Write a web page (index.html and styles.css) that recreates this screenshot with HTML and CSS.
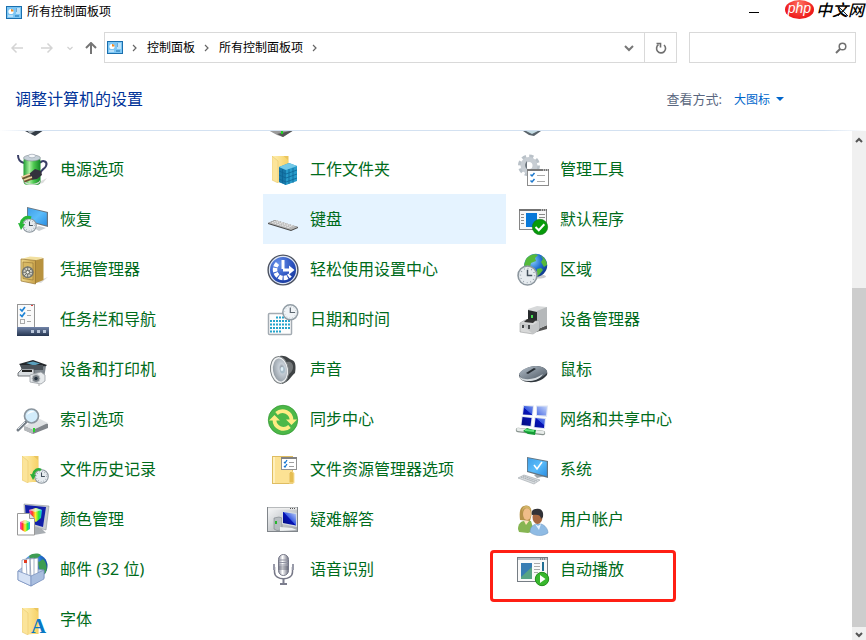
FILE: index.html
```html
<!DOCTYPE html>
<html lang="zh-CN">
<head>
    <meta charset="UTF-8">
    <meta name="viewport" content="width=device-width, initial-scale=1.0">
    <title>所有控制面板项</title>
    <link rel="stylesheet" href="styles.css">
</head>
<body>

    <!-- shared gradients and symbols -->
    <svg class="defs" aria-hidden="true">
        <defs>
            <linearGradient id="green" x1="0" x2="1"><stop offset="0" stop-color="#1f9e32"/><stop offset=".35" stop-color="#a9efa0"/><stop offset=".6" stop-color="#4cc94f"/><stop offset="1" stop-color="#138326"/></linearGradient>
            <linearGradient id="screen" x1="0" y1="0" x2="1" y2="1"><stop offset="0" stop-color="#3f9fe8"/><stop offset=".5" stop-color="#5bbcfa"/><stop offset="1" stop-color="#2b8fe4"/></linearGradient>
            <linearGradient id="gold" x1="0" x2="1"><stop offset="0" stop-color="#f0d98c"/><stop offset="1" stop-color="#c9a24a"/></linearGradient>
            <linearGradient id="folder" x1="0" x2="1"><stop offset="0" stop-color="#fff0b5"/><stop offset="1" stop-color="#f6d267"/></linearGradient>
            <linearGradient id="navy" x1="0" y1="0" x2="0" y2="1"><stop offset="0" stop-color="#7184a8"/><stop offset="1" stop-color="#24344f"/></linearGradient>
            <linearGradient id="steel" x1="0" y1="0" x2="1" y2="1"><stop offset="0" stop-color="#f8f9fa"/><stop offset="1" stop-color="#9fa4a9"/></linearGradient>
            <linearGradient id="blue" x1="0" y1="1" x2="1" y2="0"><stop offset="0" stop-color="#000b78"/><stop offset=".5" stop-color="#0714b8"/><stop offset=".52" stop-color="#3a5ce0"/><stop offset="1" stop-color="#c4d6fb"/></linearGradient>
            <linearGradient id="rainbow" x1="0" x2="1"><stop offset="0" stop-color="#ff40e0"/><stop offset=".25" stop-color="#ff3a2a"/><stop offset=".5" stop-color="#fff02a"/><stop offset=".75" stop-color="#29e83c"/><stop offset="1" stop-color="#13b6ff"/></linearGradient>
            <linearGradient id="mouse" x1="0" y1="0" x2="1" y2="1"><stop offset="0" stop-color="#b4bfca"/><stop offset="1" stop-color="#4b5661"/></linearGradient>
            <linearGradient id="mic" x1="0" x2="1"><stop offset="0" stop-color="#8b8d9c"/><stop offset=".4" stop-color="#fff"/><stop offset="1" stop-color="#6d6f80"/></linearGradient>
            <radialGradient id="access" cx=".35" cy=".3" r=".8"><stop offset="0" stop-color="#6a94ec"/><stop offset=".6" stop-color="#2950bd"/><stop offset="1" stop-color="#122f8d"/></radialGradient>
            <radialGradient id="globe" cx=".35" cy=".3" r=".8"><stop offset="0" stop-color="#8fd0ff"/><stop offset=".5" stop-color="#2170cf"/><stop offset="1" stop-color="#0c2f80"/></radialGradient>
            <radialGradient id="cone" cx=".65" cy=".45" r=".7"><stop offset="0" stop-color="#6d7680"/><stop offset=".3" stop-color="#c8d0d8"/><stop offset="1" stop-color="#8e979f"/></radialGradient>
            <symbol id="cpanel" viewBox="0 0 16 13">
                <rect x=".5" y=".5" width="15" height="12" fill="#7cc6f4" stroke="#1a6fae"/>
                <circle cx="5" cy="5.500" r="2.600" fill="#fff"/>
                <path d="M5 5.500V2.900A2.600 2.600 0 0 1 7.600 5.500Z" fill="#f08a24"/>
                <path d="M10 3h4M10 5h4M10 7h4" stroke="#fff"/>
                <path d="M10 3h1M10 5h1" stroke="#1a6fae"/>
                <path d="M2 10h5" stroke="#eef8ff"/><path d="M9 10h4" stroke="#1a6fae"/>
            </symbol>
            <symbol id="clock" viewBox="0 0 20 20">
                <circle cx="10" cy="10" r="9" fill="#e6ebef" stroke="#8c969e" stroke-width="1.500"/>
                <circle cx="10" cy="10" r="6.800" fill="none" stroke="#7d8a94" stroke-width="1.400" stroke-dasharray=".6 2.960"/>
                <path d="M10 4.500V10h4.500" fill="none" stroke="#43505c" stroke-width="1.400"/>
            </symbol>
            <symbol id="folderback" viewBox="0 0 17 27">
                <path d="M5 0h11.500v26H5Z" fill="#eac55d"/>
                <path d="M0 0h11.500L16 4v21.500L6 26.500 0 24Z" fill="url(#folder)"/>
                <path d="M0 0 6 5v22L0 24Z" fill="#fbe49a" stroke="#e5c061" stroke-width=".5"/>
            </symbol>
        </defs>
    </svg>

    <div class="window">
        <header class="titlebar">
            <svg class="app-icon" aria-hidden="true"><use href="#cpanel"/></svg>
            <h1 class="title">所有控制面板项</h1>
            <button class="minimize" aria-label="最小化"></button>
            <div class="brand">
                <span class="brand-php">php</span>
                <span class="brand-name">中文网</span>
                <svg class="close" viewBox="0 0 10 10" aria-hidden="true"><path d="M0 0 10 10M10 0 0 10" stroke="#222"/></svg>
            </div>
        </header>

        <div class="toolbar">
            <button class="nav-button" aria-label="后退"><svg class="arrow" viewBox="0 0 12 12"><path d="M12 6H1M5.500 1.500 1 6l4.500 4.500" stroke="#d4d4d4" stroke-width="1.500"/></svg></button>
            <button class="nav-button" aria-label="前进"><svg class="arrow" viewBox="0 0 12 12"><path d="M0 6h11M6.500 1.500 11 6l-4.500 4.500" stroke="#d4d4d4" stroke-width="1.500"/></svg></button>
            <button class="nav-button recent" aria-label="最近"><svg class="tiny" viewBox="0 0 6 6"><path d="M.5 2 3 4.500 5.500 2" stroke="#d0d0d0" stroke-width="1.200"/></svg></button>
            <button class="nav-button up" aria-label="向上"><svg class="arrow" viewBox="0 0 12 12"><path d="M6 12V1M1 6l5-5 5 5" stroke="#757575" stroke-width="2"/></svg></button>
            <div class="address">
                <svg class="app-icon" aria-hidden="true"><use href="#cpanel"/></svg>
                <svg class="sep" viewBox="0 0 6 8"><path d="m1 1 3 3-3 3"/></svg>
                <a class="crumb" href="#">控制面板</a>
                <svg class="sep" viewBox="0 0 6 8"><path d="m1 1 3 3-3 3"/></svg>
                <a class="crumb" href="#">所有控制面板项</a>
                <svg class="sep" viewBox="0 0 6 8"><path d="m1 1 3 3-3 3"/></svg>
                <button class="drop" aria-label="展开"><svg class="arrow" viewBox="0 0 12 12"><path d="m2 4 4 4 4-4" stroke="#777" stroke-width="2"/></svg></button>
                <button class="refresh" aria-label="刷新"><svg class="arrow" viewBox="0 0 12 12"><path d="M9 3A4.500 4.500 0 1 1 3.500 2.700M1.500 1.500h4v4" stroke="#707070" stroke-width="1.600"/></svg></button>
            </div>
            <div class="search">
                <input class="search-input" type="text" aria-label="搜索">
                <svg class="arrow" viewBox="0 0 12 12" aria-hidden="true"><circle cx="7.500" cy="4.500" r="3.300" stroke="#707070" stroke-width="1.500"/><path d="M5 7 1 11" stroke="#707070" stroke-width="2"/></svg>
            </div>
        </div>

        <div class="heading">
            <h2 class="heading-text">调整计算机的设置</h2>
            <span class="view-label" id="viewLabel">查看方式:</span>
            <button class="view-button" aria-describedby="viewLabel">大图标</button>
        </div>

        <div class="content">
            <ul class="items">
                <li class="item"><svg class="icon" viewBox="0 0 32 32"><path d="M6 27h21l-9 6Z" fill="#333c46"/><path d="M10 27h10l-7 4Z" fill="#aab2b8"/></svg></li>
                <li class="item"><svg class="icon" viewBox="0 0 32 32"><path d="M1 27h26l-11 7-6-2Z" fill="#9b9b9b"/><path d="M10 31 27 27l-11 7Z" fill="#555"/><path d="M15 28v3" stroke="#20d020" stroke-width="2"/></svg></li>
                <li class="item"><svg class="icon" viewBox="0 0 32 32"><path d="M6 28h18l-7 5-5-1Z" fill="#59636b"/><path d="M9 28h12l-6 3Z" fill="#c3dbe3"/></svg></li>

                <li class="item"><a class="link" href="#">
                    <svg class="icon" viewBox="0 0 32 32"><path d="M10 29h12l8-4-4 5-8 2Z" fill="#ddd"/><path d="M1 2c0 5 2 7 6 8M23 10c3-4 8-1 6 3-1 3-6 4-6 8" fill="none" stroke="#3a3f66" stroke-width="2"/><rect x="6.500" y="4" width="17" height="28" rx="4" fill="url(#green)"/><path d="M7 27c2 5 14 5 16 0v2c-2 4-14 4-16 0Z" fill="#d3dbd4"/><ellipse cx="15" cy="5" rx="8.500" ry="3" fill="#c5d0d8" stroke="#7d8890" stroke-width=".6"/><ellipse cx="15" cy="3" rx="3.500" ry="1.800" fill="#f4f7fa" stroke="#8791a0" stroke-width=".5"/><path d="m12 21 6-5 6 2 1 4-5 4-6 1Z" fill="#33323c"/><path d="m5 25 8-3M7 28l8-3" stroke="#6f5130" stroke-width="3"/><path d="m5 24 8-3M7 27l8-3" stroke="#edd6a2" stroke-width="1.500"/></svg>
                    <span class="label">电源选项</span></a></li>
                <li class="item"><a class="link" href="#">
                    <svg class="icon" viewBox="0 0 32 32"><use href="#folderback" x="5" y="3" width="17" height="27"/><path d="m12 14 10-4 8 3v15l-11 4-7-3Z" fill="#279bca"/><path d="m12 14 7 3v15l-7-3Z" fill="#1677a8"/><path d="m12 14 10-4 8 3-11 4Z" fill="#72c9e8"/><path d="m12 18 7 3 11-4M12 22l7 3 11-4M12 26l7 3 11-4M15.500 16v14M22 16v15M26 15v15" fill="none" stroke="#0d6595" stroke-width=".8"/></svg>
                    <span class="label">工作文件夹</span></a></li>
                <li class="item"><a class="link" href="#">
                    <svg class="icon" viewBox="0 0 32 32"><circle cx="12" cy="12.500" r="9" fill="none" stroke="#b9c1c8" stroke-width="4" stroke-dasharray="4.060 3"/><circle cx="12" cy="12.500" r="6" fill="none" stroke="#c7cdd3" stroke-width="5"/><path d="M10 8c-3 3-2 7 0 8Z" fill="#6b747c"/><rect x="10.500" y="16.500" width="21" height="16" fill="#fff" stroke="#8c8c8c"/><path d="M10 17h22" stroke="#777" stroke-width="2"/><path d="M26 17h5" stroke="#fff" stroke-dasharray="1 1"/><path d="m13.500 21.500 1.500 1.500 2.500-3M13.500 27.500l1.500 1.500 2.500-3" fill="none" stroke="#1d78cc" stroke-width="1.500"/><path d="M20 22.500h8M20 28.500h8" stroke="#aaa"/></svg>
                    <span class="label">管理工具</span></a></li>

                <li class="item"><a class="link" href="#">
                    <svg class="icon" viewBox="0 0 32 32"><path d="m17 25 5-2 7 2-7 3Z" fill="#c9ced2"/><path d="m10 4 21 5v15L10 18.500Z" fill="#69747e"/><path d="m10.800 5 19 4.800v12.700L10.800 17.500Z" fill="url(#screen)"/><use href="#clock" x="5" y="15" width="15" height="15"/><path d="M14 15c-5-2-9 1-10 6" fill="none" stroke="#28b637" stroke-width="3"/><path d="m1 20 7 1-4 6Z" fill="#28b637"/></svg>
                    <span class="label">恢复</span></a></li>
                <li class="item"><a class="link selected" href="#">
                    <svg class="icon" viewBox="0 0 32 32"><path d="m1 20 7-3 23 7v1l-7 3L1 21Z" fill="#454545"/><path d="m1 20 7-3 23 7-7 3Z" fill="#b4b4b4"/><path d="m5 19.500 18 5.500M7 18.500 25 24M9 17.700 27 23.200" stroke="#e8e8e8" stroke-width="1" stroke-dasharray="2 .6"/></svg>
                    <span class="label">键盘</span></a></li>
                <li class="item"><a class="link" href="#">
                    <svg class="icon" viewBox="0 0 32 32"><rect x="2.500" y="6.500" width="27" height="20" fill="#f7f7f7" stroke="#858585"/><path d="M2 7h28" stroke="#737373" stroke-width="2"/><path d="M24 7h5" stroke="#fff" stroke-dasharray="1 1"/><path d="M4 11.500h3M4 14.500h3M4 17.500h3M4 20.500h3M22 11.500h6M22 14.500h6" stroke="#8a8a8a"/><rect x="9" y="10" width="11" height="14" fill="#0878d8"/><circle cx="23" cy="24" r="7.700" fill="#079b0b" stroke="#16711b" stroke-width=".6"/><path d="m18.500 24 3.300 3.300 5.500-6" fill="none" stroke="#fff" stroke-width="2"/></svg>
                    <span class="label">默认程序</span></a></li>

                <li class="item"><a class="link" href="#">
                    <svg class="icon" viewBox="0 0 32 32"><path d="m18 29 13-5-7 6Z" fill="#ddd"/><path d="m4 6 9-2.500 13 1L18 8Z" fill="#f2e0a0"/><path d="M18 7.500 26.500 5v22L18 30.500Z" fill="#b8923f"/><path d="m4 6 14.500 1.500V31L4 28Z" fill="url(#gold)" stroke="#957432" stroke-width=".7"/><path d="m6 9 10 1v17L6 25.500Z" fill="#d8b862" stroke="#907133" stroke-width=".6"/><circle cx="10.700" cy="19.300" r="5.200" fill="#d4d4ca" stroke="#747770" stroke-width="1.500"/><path d="M10.700 13.500v11.500M5 19.300h11.500M7 15.500l7.500 7.500M14.500 15.500 7 23" stroke="#73756e"/><circle cx="10.700" cy="19.300" r="1.800" fill="#f3f3ea" stroke="#60635b"/></svg>
                    <span class="label">凭据管理器</span></a></li>
                <li class="item"><a class="link" href="#">
                    <svg class="icon" viewBox="0 0 32 32"><circle cx="16" cy="17" r="14.800" fill="url(#access)" stroke="#4d5360" stroke-width="1.600"/><circle cx="16" cy="17" r="13.600" fill="none" stroke="#dfe6f2" stroke-width="1.200"/><path d="M10.500 10.500A8.500 8.500 0 1 0 23 22" fill="none" stroke="#fff" stroke-width="4.500" stroke-dasharray="4 1"/><path d="M14.500 7h3v9h-3ZM16 15.500h6v-3l5.500 4.500-5.500 4.500v-3h-6Z" fill="#fff"/></svg>
                    <span class="label">轻松使用设置中心</span></a></li>
                <li class="item"><a class="link" href="#">
                    <svg class="icon" viewBox="0 0 32 32"><ellipse cx="21" cy="23.500" rx="8" ry="2" fill="#ccc"/><circle cx="18.700" cy="12.300" r="11.500" fill="url(#globe)"/><path d="M9 6c3-4 9-6 12-4l-3 3 1 3-5 2-1 4-4 1-2-3ZM24 3c3 1 6 5 6 9l-3 2-3-5 2-3ZM20 16l4-1 2 2-4 5-2 1Z" fill="#55b93b"/><use href="#clock" x="0" y="12" width="21" height="21"/></svg>
                    <span class="label">区域</span></a></li>

                <li class="item"><a class="link" href="#">
                    <svg class="icon" viewBox="0 0 32 32"><rect x=".5" y="1.500" width="17" height="24" fill="#fafafa" stroke="#959595"/><path d="M14 2.500h2" stroke="#d44"/><path d="m3 6 2 2 3-4M3 11.500l2 2 3-4" fill="none" stroke="#1c82d5" stroke-width="1.700"/><path d="M10 7.500h4M10 12.500h4M10 18.500h4" stroke="#aaa"/><rect x="3.500" y="16.500" width="4" height="4" fill="none" stroke="#aaa"/><rect y="24" width="32" height="9" fill="url(#navy)"/><path d="M14 28.500h3m3 0h3m3 0h3" stroke="#b9c6da" stroke-width="3"/></svg>
                    <span class="label">任务栏和导航</span></a></li>
                <li class="item"><a class="link" href="#">
                    <svg class="icon" viewBox="0 0 32 32"><rect x="1.500" y="10.500" width="23" height="21" rx="1" fill="#fdfdfd" stroke="#a3abb2" stroke-width="1.500"/><path d="M9 14.500h15M3 18h21M3 21.500h21M3 25h21M3 28.500h11" stroke="#25a4cb" stroke-width="2" stroke-dasharray="2 1"/><circle cx="23.300" cy="9.300" r="7.500" fill="#eff3f6" stroke="#929da5" stroke-width="1.500"/><circle cx="23.300" cy="9.300" r="5.700" fill="none" stroke="#a3acb2" stroke-dasharray=".5 2.480"/><path d="M23.300 4.500v5H28" fill="none" stroke="#5c6770" stroke-width="1.200"/></svg>
                    <span class="label">日期和时间</span></a></li>
                <li class="item"><a class="link" href="#">
                    <svg class="icon" viewBox="0 0 32 32"><path d="m18 27 12-5v4l-11 3Z" fill="#555"/><path d="m11 6 9-3 10 1v18l-11 5-8-3Z" fill="#d7d9da"/><path d="m20 8 10-4v18l-11 5Z" fill="#b5b8ba"/><path d="m11 7 9 2v14l-9-2Z" fill="#272b2d"/><path d="M14 12h2v3h-2Z" fill="#45df52"/><path d="m3 20 5-3 14 1v9l-6 4-13-2Z" fill="#d7d8d8" stroke="#8b8d8e" stroke-width=".5"/><path d="m3 20 13 2 6-4v9l-6 4Z" fill="#c4c6c7"/><path d="m7 19 3-3 9 1-3 3Z" fill="#333"/><path d="M6 22v3M12 22v4" stroke="#45484a" stroke-width="2"/></svg>
                    <span class="label">设备管理器</span></a></li>

                <li class="item"><a class="link" href="#">
                    <svg class="icon" viewBox="0 0 32 32"><path d="m2 11 14-4 14 5-3 3H6Z" fill="#24282c"/><path d="m9 10 7-1.500 7 2-6 2Z" fill="#5ba1bd"/><path d="m3 12 4 3 22-2-2 12-20-4Z" fill="#7f878e"/><path d="M3 12h23v5H5Z" fill="#4b5258"/><path d="m1 20 4-4h12v7H1Z" fill="#d9dde0" stroke="#54595e" stroke-width=".8"/><path d="M5 18h10" stroke="#222" stroke-width="2"/><path d="m13 22 11-3 4 3v6l-4 3-11-2Z" fill="#e7eaec" stroke="#9aa0a5" stroke-width=".8"/><circle cx="19" cy="25.500" r="4" fill="#767d83" stroke="#c4c9cd"/><circle cx="19" cy="25.500" r="1.700" fill="#24313e"/><path d="M22 31v2" stroke="#aaa"/></svg>
                    <span class="label">设备和打印机</span></a></li>
                <li class="item"><a class="link" href="#">
                    <svg class="icon" viewBox="0 0 32 32"><path d="M13 3c6-1 9 3 12 4 4 1 4 8 3 13-3 2-6 9-13 11Z" fill="#3f4345"/><path d="M20 9c4-1 6 2 6 5 0 4-3 7-6 8Z" fill="#74787a"/><ellipse cx="12.500" cy="17" rx="9" ry="13.500" transform="rotate(-8 12.500 17)" fill="#f0f2f3" stroke="#7b8083"/><ellipse cx="13" cy="17" rx="7" ry="11.500" transform="rotate(-8 13 17)" fill="url(#cone)"/><ellipse cx="15.500" cy="17" rx="2.500" ry="3.500" fill="#a9bdc9"/><ellipse cx="15" cy="16" rx="1.300" ry="2" fill="#e0f0f7"/></svg>
                    <span class="label">声音</span></a></li>
                <li class="item"><a class="link" href="#">
                    <svg class="icon" viewBox="0 0 32 32"><path d="M2 22c1-5 11-9 17-9 7 0 13 4 11 9-4 5-11 8-18 7-6 0-10-3-10-7Z" fill="#30373d"/><path d="M2 21c2-5 11-8 17-8 6 0 12 3 11 7-4 4-10 7-17 7-6 0-10-2-11-6Z" fill="url(#mouse)"/><path d="M2 23c5 5 15 4 24-2-4 6-9 7-14 7-6 0-9-1-10-5Z" fill="#d7dde1"/><path d="m9 20 8-5 2 1-8 5Z" fill="#262d33"/></svg>
                    <span class="label">鼠标</span></a></li>

                <li class="item"><a class="link" href="#">
                    <svg class="icon" viewBox="0 0 32 32"><path d="m7 24 16-7 8 4v4l-15 6-9-4Z" fill="#80858a"/><path d="m7 23 16-7 8 4-15 7Z" fill="#dfe2e4"/><path d="m7 23 9 4v4l-9-4Z" fill="#b5b9bc"/><path d="M17 25v4" stroke="#25d42b" stroke-width="2"/><path d="m9 19-8 8" stroke="#747d86" stroke-width="3" stroke-linecap="round"/><path d="m8 19-7 7" stroke="#dce2e7"/><circle cx="14.500" cy="13" r="7" fill="#cdeafb" fill-opacity=".9" stroke="#8a959e" stroke-width="1.700"/><path d="M10 12c1-4 5-5 8-3-3 0-6 1-8 3Z" fill="#fff"/></svg>
                    <span class="label">索引选项</span></a></li>
                <li class="item"><a class="link" href="#">
                    <svg class="icon" viewBox="0 0 32 32"><circle cx="16" cy="17" r="14.700" fill="#4cb848" stroke="#379b35" stroke-width=".8"/><path d="M9.500 10.500A9 9 0 0 1 24.500 17.500M22.500 23.500A9 9 0 0 1 7.500 16.500" fill="none" stroke="#ffec84" stroke-width="3.800"/><path d="M2 17.500h11L7.500 12ZM19 16.500h11L24.500 22Z" fill="#ffec84"/></svg>
                    <span class="label">同步中心</span></a></li>
                <li class="item"><a class="link" href="#">
                    <svg class="icon" viewBox="0 0 32 32"><path d="m6 2 11 .5L16 13 5 12ZM19 2.500h12L30 14l-11-1ZM4.500 13l11 1-1 10-11-1ZM17.500 14 29 15l-1 11-11.500-1Z" fill="#dfe5f2"/><path d="m7 3 9 .5-1 8.500-9-.5ZM20 3.500h10l-1 9-9-.5ZM5.500 14l9 1-1 8-9-1ZM18.500 15l9.500 1-1 9-9.500-1Z" fill="url(#blue)"/><path d="m1 27 25 3" stroke="#87928d" stroke-width="4.500" stroke-linecap="round"/><path d="m1 26.500 25 3" stroke="#e8ecea" stroke-width="3" stroke-linecap="round"/><path d="m6 28 4-3 6 2 3 0-1 5-7-1Z" fill="#159a35"/><path d="m8 27 9 1" stroke="#5ee37b" stroke-width="2"/></svg>
                    <span class="label">网络和共享中心</span></a></li>

                <li class="item"><a class="link" href="#">
                    <svg class="icon" viewBox="0 0 32 32"><use href="#folderback" x="5" y="3" width="17" height="27"/><use href="#clock" x="17" y="16" width="15" height="15"/><path d="M24 17c-3-2-7 0-8 5" fill="none" stroke="#2cad3b" stroke-width="2.500"/><path d="m13 21 6 1-3 5Z" fill="#2cad3b"/></svg>
                    <span class="label">文件历史记录</span></a></li>
                <li class="item"><a class="link" href="#">
                    <svg class="icon" viewBox="0 0 32 32"><rect x="5.500" y="3.500" width="20" height="27" fill="#fce294" stroke="#dfbd61"/><path d="M7 4v26" stroke="#fff0bd" stroke-width="2"/><path d="M22 30V20l2-2 3 2v10Z" fill="#e5bd52" stroke="#f9e09a"/><rect x="14.500" y="4.500" width="15" height="12" fill="#fff" stroke="#919191"/><path d="M14 5h16" stroke="#828282" stroke-width="2"/><path d="m17 9 1 1 2-3M17 13l1 1 2-3" fill="none" stroke="#1676d0" stroke-width="1.300"/><path d="M22 9.500h5M22 13.500h5" stroke="#a0a0a0"/></svg>
                    <span class="label">文件资源管理器选项</span></a></li>
                <li class="item"><a class="link" href="#">
                    <svg class="icon" viewBox="0 0 32 32"><path d="m17 22 5-2 6 3-8 2Z" fill="#9da6ac"/><path d="m10 4 21 4v17l-21-6Z" fill="#637480"/><path d="m10.800 5 19 3.800v14.500l-19-5.300Z" fill="url(#screen)"/><path d="m17 12 3 4 5-7" fill="none" stroke="#fff" stroke-width="1.600"/><path d="m1 25 6-3 16 5-6 4Z" fill="#d8dcdf" stroke="#8f979d" stroke-width=".5"/><path d="m4 24 14 5M6 23l14 5" stroke="#a0a8ad" stroke-dasharray="1.500 .7"/></svg>
                    <span class="label">系统</span></a></li>

                <li class="item"><a class="link" href="#">
                    <svg class="icon" viewBox="0 0 32 32"><path d="m18 24 7 2 4 4-12 2Z" fill="#a8adb2"/><path d="m7 1 25 2-3 24L8 21Z" fill="#c8ccd0" stroke="#8d9499" stroke-width=".6"/><path d="m8 2 21 2-3 20L9 19Z" fill="#111fa8"/><path d="m12 7 7-2 6 2-1 8-5 4-5-3Z" fill="url(#rainbow)"/><path d="m12 7 7-2 6 2-7 2Z" fill="#d9ffff" fill-opacity=".65"/><path d="M.500 10.500h12l5 5V32H.5Z" fill="#fff" stroke="#999"/><path d="M12.500 10.500v5h5" fill="#e7e7e7" stroke="#999"/><path d="m3 19 5-2 5 2v7l-5 3-5-3Z" fill="url(#rainbow)"/><path d="m3 19 5-2 5 2-5 2Z" fill="#fff" fill-opacity=".5"/></svg>
                    <span class="label">颜色管理</span></a></li>
                <li class="item"><a class="link" href="#">
                    <svg class="icon" viewBox="0 0 32 32"><rect x=".5" y="4.500" width="30" height="24" fill="url(#steel)" stroke="#80858a"/><path d="M1 5.500h29" stroke="#eee" stroke-width="2"/><path d="M23 5.500h6" stroke="#555" stroke-dasharray="1 1"/><path d="m7 15 5-1 3 1v12l-5 .5-3-1.500Z" fill="#b7bdc1" stroke="#6d747b" stroke-width=".5"/><path d="M9 18v3" stroke="#28b82f" stroke-width="2"/><path d="m15 8 15 2v14l-15-3Z" fill="#d7dde2"/><path d="m16 9 13 2v11.500L16 20Z" fill="url(#blue)"/><path d="m13 24 12 1 5 2-17 1Z" fill="#edf0f1"/></svg>
                    <span class="label">疑难解答</span></a></li>
                <li class="item"><a class="link" href="#">
                    <svg class="icon" viewBox="0 0 32 32"><path d="M1 26c0-5 3-8 6-8h7l3 10-6 2-9-1Z" fill="#86b552"/><path d="M3 17C2 8 3 3 9 2.500c4 0 6 3 5.500 9.500L13 18Z" fill="#b5934a"/><ellipse cx="10" cy="11" rx="4" ry="6" fill="#efbd89"/><path d="M5 9c1-4 4-5 9-2-1-4-4-5-6-4-2 1-3 3-3 6Z" fill="#d1b266"/><path d="M7 18h5l-3 4Z" fill="#ffe3bb"/><path d="M13 29c0-5 3-7 6-8h5c4 1 7 5 7 9-6 4-14 3-18-1Z" fill="#8fbbe4" stroke="#6490bc" stroke-width=".5"/><ellipse cx="20.500" cy="14" rx="5" ry="7" fill="#a76840"/><path d="M15 12c-1-4 1-6 4-6 5-1 8 2 7 8l-2 2c0-4-3-5-9-4Z" fill="#313237"/><path d="m18 21 3 2 3-2-2 6Z" fill="#e7f4ff"/></svg>
                    <span class="label">用户帐户</span></a></li>

                <li class="item"><a class="link" href="#">
                    <svg class="icon" viewBox="0 0 32 32"><circle cx="18.500" cy="13" r="12" fill="url(#globe)"/><path d="M12 3c4-3 9-3 12-1l-5 4 3 3 4-3c4 4 5 10 2 15l-5-3-2-7-7-2Z" fill="#3e9d52"/><path d="m1 18 5-4 21 3v8L14 33 1 27Z" fill="#b7c9e8" stroke="#748dbb" stroke-width=".7"/><path d="m5 7 8-2v18l-8-2ZM9 6l8-1v18l-7 1ZM13 6l8-1v18l-7 2Z" fill="#fff" stroke="#8090ae" stroke-width=".7"/><path d="M7 7h3v3H7Z" fill="#e33b20"/><path d="m1 18 13 5v10L1 27Z" fill="#d6e2f5" stroke="#748dbb" stroke-width=".7"/><path d="m14 23 13-6v9l-13 7Z" fill="#a9bedf" stroke="#748dbb" stroke-width=".7"/></svg>
                    <span class="label">邮件 (32 位)</span></a></li>
                <li class="item"><a class="link" href="#">
                    <svg class="icon" viewBox="0 0 32 32"><path d="M7.500 14v5c0 9 18 9 18 0v-5" fill="none" stroke="#777887" stroke-width="1.500"/><path d="M7 11v6M26 11v6" stroke="#999baa" stroke-width="2"/><rect x="11.500" y="1.500" width="10" height="21" rx="5" fill="url(#mic)" stroke="#767888"/><path d="M12 7h9M12 9.500h9M12 12h9" stroke="#9193a2"/><path d="M12 14h9M12 16h9" stroke="#5d5f70" stroke-width=".8"/><path d="M16.500 25v6M13 31h7" stroke="#7b7d8d" stroke-width="2"/></svg>
                    <span class="label">语音识别</span></a></li>
                <li class="item marked"><a class="link" href="#">
                    <svg class="icon" viewBox="0 0 32 32"><rect x=".5" y="4.500" width="30" height="24" fill="#f9f9f9" stroke="#767d84"/><path d="M1 6h29" stroke="#b9c0c6" stroke-width="2"/><path d="M23 6h6" stroke="#51575e" stroke-dasharray="1 1"/><path d="M4 10h11v16H4Z" fill="#387db3"/><path d="m4 24 11-10v12H4Z" fill="#58a484"/><path d="M17 10.500h6M17 13.500h6M17 16.500h6M17 19.500h4" stroke="#aaa"/><path d="M25 9h2v9h-2Z" fill="#216f94"/><circle cx="25" cy="26" r="6.700" fill="#38b72d" stroke="#218e1c"/><path d="m23 22 5.500 4-5.500 4Z" fill="#fff"/></svg>
                    <span class="label">自动播放</span></a></li>

                <li class="item"><a class="link" href="#">
                    <svg class="icon" viewBox="0 0 32 32"><use href="#folderback" x="5" y="5" width="17" height="27"/><text class="font-letter" x="14" y="30">A</text></svg>
                    <span class="label">字体</span></a></li>
            </ul>

            <div class="scrollbar">
                <button class="scroll-button" aria-label="向上滚动"><svg class="scroll-arrow" viewBox="0 0 8 8"><path d="m1 6 3-3 3 3"/></svg></button>
                <div class="scroll-space"></div>
                <div class="scroll-thumb"></div>
                <button class="scroll-button scroll-down" aria-label="向下滚动"><svg class="scroll-arrow" viewBox="0 0 8 8"><path d="m1 3 3 3 3-3"/></svg></button>
            </div>
        </div>
    </div>

</body>
</html>
```
FILE: styles.css
```css
*, *::after { box-sizing: border-box; }

body {
    margin: 0;
    background-color: white;
    color: black;
    font-family: "Noto Sans", "Noto Sans CJK SC", sans-serif;
    font-size: 12px;
    line-height: 16px;
}

button {
    display: flex;
    align-items: center;
    justify-content: center;
    padding: 0;
    border: none;
    background: transparent;
    font-family: inherit;
}

a {
    color: inherit;
    text-decoration: none;
}

svg { flex: none; }

.defs {
    position: absolute;
    width: 0;
    height: 0;
}

.window {
    display: flex;
    flex-direction: column;
    height: 100vh;
    overflow: hidden;
}

/* title bar */
.titlebar {
    display: flex;
    align-items: center;
    height: 24px;
    padding: 0 2px 0 6px;
    gap: 5px;
}

.app-icon {
    width: 16px;
    height: 13px;
}

.title {
    flex: 1;
    margin: 0;
    font-size: 12px;
    font-weight: normal;
}

.minimize {
    width: 10px;
    height: 1px;
    margin-right: 21px;
    background: black;
}

.brand {
    position: relative;
    display: flex;
    align-items: center;
    align-self: flex-start;
    gap: 2px;
    height: 19px;
}

.brand-php {
    width: 29px;
    height: 19px;
    border-radius: 50%;
    background: radial-gradient(ellipse at 50% 20%, #ff7060, #ee1c1c 70%);
    color: white;
    font-family: "Liberation Sans", sans-serif;
    font-size: 14px;
    font-style: italic;
    line-height: 16px;
    text-align: center;
}

.brand-name {
    font-size: 16px;
    font-style: italic;
    font-weight: 500;
    line-height: 18px;
}

.close {
    position: absolute;
    right: 16px;
    top: 6px;
    width: 10px;
    height: 10px;
}

/* navigation */
.toolbar {
    display: flex;
    align-items: center;
    margin-top: 8px;
    padding: 0 10px 0 2px;
}

.nav-button {
    width: 30px;
    height: 30px;
}

.recent { width: 16px; }

.up { width: 26px; }

.arrow {
    width: 12px;
    height: 12px;
    fill: none;
}

.tiny {
    width: 6px;
    height: 6px;
    fill: none;
}

.address {
    display: flex;
    flex: 1;
    align-items: center;
    height: 31px;
    padding-left: 2px;
    border: 1px solid #d9d9d9;
}

.sep {
    width: 6px;
    height: 8px;
    margin: 0 9px;
    fill: none;
    stroke: #666;
    stroke-width: 1.2;
}

.drop {
    width: 30px;
    height: 29px;
    margin-left: auto;
}

.refresh {
    width: 32px;
    height: 29px;
    border-left: 1px solid #d9d9d9;
}

.search {
    display: flex;
    align-items: center;
    width: 167px;
    height: 31px;
    margin-left: 12px;
    padding-right: 8px;
    border: 1px solid #d9d9d9;
}

.search-input {
    flex: 1;
    min-width: 0;
    height: 28px;
    border: none;
    outline: none;
    background: transparent;
}

/* heading */
.heading {
    display: flex;
    flex: none;
    align-items: center;
    height: 68px;
    padding: 5px 82px 0 15px;
    border-bottom: 1px solid;
    border-image: linear-gradient(to right, white, #d3e1f1 5%, #d3e1f1 95%, white) 1;
}

.heading-text {
    flex: 1;
    margin: 0;
    color: #003399;
    font-size: 16px;
    font-weight: normal;
    line-height: 24px;
}

.view-label {
    color: #5a6780;
    font-size: 13px;
}

.view-button {
    gap: 6px;
    margin-left: 12px;
    color: #0066cc;
    font-size: 12px;
}

.view-button::after {
    content: "";
    border: 4px solid transparent;
    border-top-color: #0066cc;
    border-bottom: none;
}

/* items */
.content {
    display: flex;
    flex: 1;
    min-height: 0;
    overflow: hidden;
}

/* the list is scrolled part of the way down */
.items {
    display: grid;
    flex: 1;
    grid-template-columns: repeat(auto-fill, 243px);
    grid-auto-rows: 50px;
    align-content: start;
    column-gap: 7px;
    margin: -37px 0 0;
    padding: 0 0 0 13px;
    list-style: none;
}

.item { position: relative; }

.item > .icon { margin: 9px 4px; }

.link {
    display: flex;
    align-items: center;
    gap: 11px;
    height: 50px;
    padding-left: 4px;
    color: #006b1b;
    font-size: 16px;
    line-height: 24px;
}

.selected { background: #e5f3ff; }

.icon {
    width: 32px;
    height: 32px;
    overflow: visible;
}

.font-letter {
    fill: #0878c4;
    font-family: "Liberation Serif", serif;
    font-size: 21px;
    font-weight: bold;
}

.marked::after {
    content: "";
    position: absolute;
    left: -23px;
    top: 6px;
    width: 186px;
    height: 52px;
    border: 3px solid #ff1f14;
    border-radius: 4px;
    pointer-events: none;
}

/* scrollbar */
.scrollbar {
    display: flex;
    flex-direction: column;
    width: 14px;
    background: #f0f0f0;
}

.scroll-button {
    width: 14px;
    height: 17px;
}

.scroll-down { height: 13px; }

.scroll-space { flex: 140; }

.scroll-thumb {
    flex: 339;
    background: #cdcdcd;
}

.scroll-arrow {
    width: 8px;
    height: 8px;
    fill: none;
    stroke: #555;
    stroke-width: 2;
}
```
